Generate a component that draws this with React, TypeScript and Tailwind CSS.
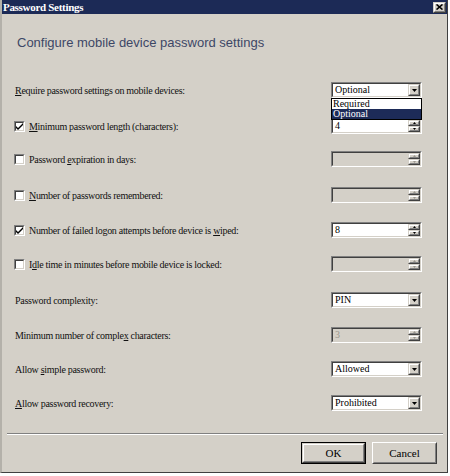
import type { ReactNode } from 'react';

function Raised({ children, className = '' }: { children?: ReactNode; className?: string }) {
  return (
    <div className={`border border-t-[#d4d0c8] border-l-[#d4d0c8] border-b-[#404040] border-r-[#404040] ${className}`}>
      <div className="flex h-full w-full items-center justify-center border border-t-white border-l-white border-b-[#808080] border-r-[#808080] bg-[#d4d0c8]">
        {children}
      </div>
    </div>
  );
}

function Sunken({ children, disabled, className = '' }: { children?: ReactNode; disabled?: boolean; className?: string }) {
  return (
    <div className={`border border-t-[#808080] border-l-[#808080] border-b-white border-r-white ${className}`}>
      <div
        className={`flex h-full w-full border border-t-[#404040] border-l-[#404040] border-b-[#d4d0c8] border-r-[#d4d0c8] ${
          disabled ? 'bg-[#d4d0c8]' : 'bg-white'
        }`}
      >
        {children}
      </div>
    </div>
  );
}

function Arrow({ up, gray, w = 5 }: { up?: boolean; gray?: boolean; w?: number }) {
  const h = Math.ceil(w / 2);
  return (
    <svg width={w} height={h} viewBox={`0 0 ${w} ${h}`} className="block">
      <path
        d={up ? `M0 ${h}L${w / 2} 0L${w} ${h}Z` : `M0 0L${w} 0L${w / 2} ${h}Z`}
        fill={gray ? '#9a978f' : '#000'}
      />
    </svg>
  );
}

function Select({ value, children }: { value: string; children?: ReactNode }) {
  return (
    <div className="relative w-[91px] h-[16px]">
      <Sunken className="h-full w-full">
        <span className="flex-1 pl-[2px] text-[10px] leading-[12px] text-black">{value}</span>
        <Raised className="w-[12px] h-full">
          <Arrow />
        </Raised>
      </Sunken>
      {children}
    </div>
  );
}

function Spinner({ value, disabled }: { value?: string; disabled?: boolean }) {
  return (
    <div className="w-[91px] h-[16px]">
      <Sunken className="h-full w-full" disabled={disabled}>
        <span
          className={`flex-1 pl-[2px] text-[10px] leading-[12px] ${
            disabled ? 'text-[#9a978f]' : 'text-black'
          }`}
        >
          {value}
        </span>
        <div className="flex w-[12px] flex-col">
          <Raised className="h-[6px] w-full">
            <Arrow up gray={disabled} w={3} />
          </Raised>
          <Raised className="h-[6px] w-full">
            <Arrow gray={disabled} w={3} />
          </Raised>
        </div>
      </Sunken>
    </div>
  );
}

function Checkbox({ checked }: { checked?: boolean }) {
  return (
    <Sunken className="w-[11px] h-[11px] shrink-0">
      {checked && (
        <svg width="7" height="7" viewBox="0 0 7 7" className="m-auto block">
          <path d="M0 3L2 5L7 0V2L2 7L0 5Z" fill="#000" />
        </svg>
      )}
    </Sunken>
  );
}

type RowDef = {
  mt: string;
  label: ReactNode;
  check?: boolean;
  checked?: boolean;
  control: ReactNode;
};

const rows: RowDef[] = [
  {
    mt: 'mt-[32px]',
    label: (
      <>
        <u>R</u>equire password settings on mobile devices:
      </>
    ),
    control: (
      <Select value="Optional">
        <div className="absolute left-0 top-full z-10 w-full border border-black bg-white text-[10px] leading-[10px]">
          <div className="h-[10px] overflow-hidden pl-[1px] text-black">Required</div>
          <div className="h-[10px] overflow-hidden bg-[#1d2b58] pl-[1px] text-white">Optional</div>
        </div>
      </Select>
    ),
  },
  {
    mt: 'mt-[20px]',
    check: true,
    checked: true,
    label: (
      <>
        <u>M</u>inimum password length (characters):
      </>
    ),
    control: <Spinner value="4" />,
  },
  {
    mt: 'mt-[17px]',
    check: true,
    label: (
      <>
        Password <u>e</u>xpiration in days:
      </>
    ),
    control: <Spinner disabled />,
  },
  {
    mt: 'mt-[20px]',
    check: true,
    label: (
      <>
        <u>N</u>umber of passwords remembered:
      </>
    ),
    control: <Spinner disabled />,
  },
  {
    mt: 'mt-[19px]',
    check: true,
    checked: true,
    label: (
      <>
        Number of failed logon attempts before device is <u>w</u>iped:
      </>
    ),
    control: <Spinner value="8" />,
  },
  {
    mt: 'mt-[18px]',
    check: true,
    label: (
      <>
        I<u>d</u>le time in minutes before mobile device is locked:
      </>
    ),
    control: <Spinner disabled />,
  },
  {
    mt: 'mt-[20px]',
    label: 'Password complexity:',
    control: <Select value="PIN" />,
  },
  {
    mt: 'mt-[19px]',
    label: (
      <>
        Minimum number of comple<u>x</u> characters:
      </>
    ),
    control: <Spinner value="3" disabled />,
  },
  {
    mt: 'mt-[18px]',
    label: (
      <>
        Allow <u>s</u>imple password:
      </>
    ),
    control: <Select value="Allowed" />,
  },
  {
    mt: 'mt-[18px]',
    label: (
      <>
        <u>A</u>llow password recovery:
      </>
    ),
    control: <Select value="Prohibited" />,
  },
];

export default function App() {
  return (
    <div className="w-[450px] h-[476px] bg-white [font-family:'Liberation_Serif',serif]">
      <div className="flex h-[473px] w-[448px] flex-col border-l-2 border-r border-b border-l-[#b4b1aa] border-r-[#404040] border-b-[#404040] bg-[#d4d0c8]">
        <div className="flex h-[14px] items-center justify-between bg-[#1c2a56] pl-[1px] pr-[1px]">
          <span className="text-[11px] font-bold leading-[14px] tracking-[-0.3px] text-white">
            Password Settings
          </span>
          <Raised className="h-[11px] w-[13px]">
            <svg width="7" height="6" viewBox="0 0 7 6" className="block">
              <path d="M0.5 0.5L6.5 5.5M6.5 0.5L0.5 5.5" stroke="#000" strokeWidth="1.6" />
            </svg>
          </Raised>
        </div>

        <div className="mt-[22px] pl-[15px] [font-family:'Liberation_Sans',sans-serif] text-[13px] leading-[14px] text-[#3d4766]">
          Configure mobile device password settings
        </div>

        <div className="flex flex-col">
          {rows.map((r, i) => (
            <div key={i} className={`flex h-[16px] items-center justify-between pl-[12px] pr-[25px] ${r.mt}`}>
              <div className="flex items-center gap-[4px] text-[10px] tracking-[-0.3px] text-[#111]">
                {r.check && <Checkbox checked={r.checked} />}
                <span className={r.check ? '' : 'pl-[1px]'}>{r.label}</span>
              </div>
              {r.control}
            </div>
          ))}
        </div>

        <div className="ml-[5px] mr-[4px] mt-[22px] h-[2px] border-t border-b border-t-[#808080] border-b-white" />

        <div className="mt-[7px] flex justify-end gap-[6px] pr-[10px]">
          <div className="h-[22px] w-[65px] border border-black">
            <Raised className="h-full w-full">
              <span className="text-[11px] text-black">OK</span>
            </Raised>
          </div>
          <div className="h-[22px] w-[65px] border border-t-white border-l-white border-b-[#404040] border-r-[#404040]">
            <div className="flex h-full w-full items-center justify-center border border-t-[#d4d0c8] border-l-[#d4d0c8] border-b-[#808080] border-r-[#808080]">
              <span className="text-[11px] text-black">Cancel</span>
            </div>
          </div>
        </div>
      </div>
    </div>
  );
}
